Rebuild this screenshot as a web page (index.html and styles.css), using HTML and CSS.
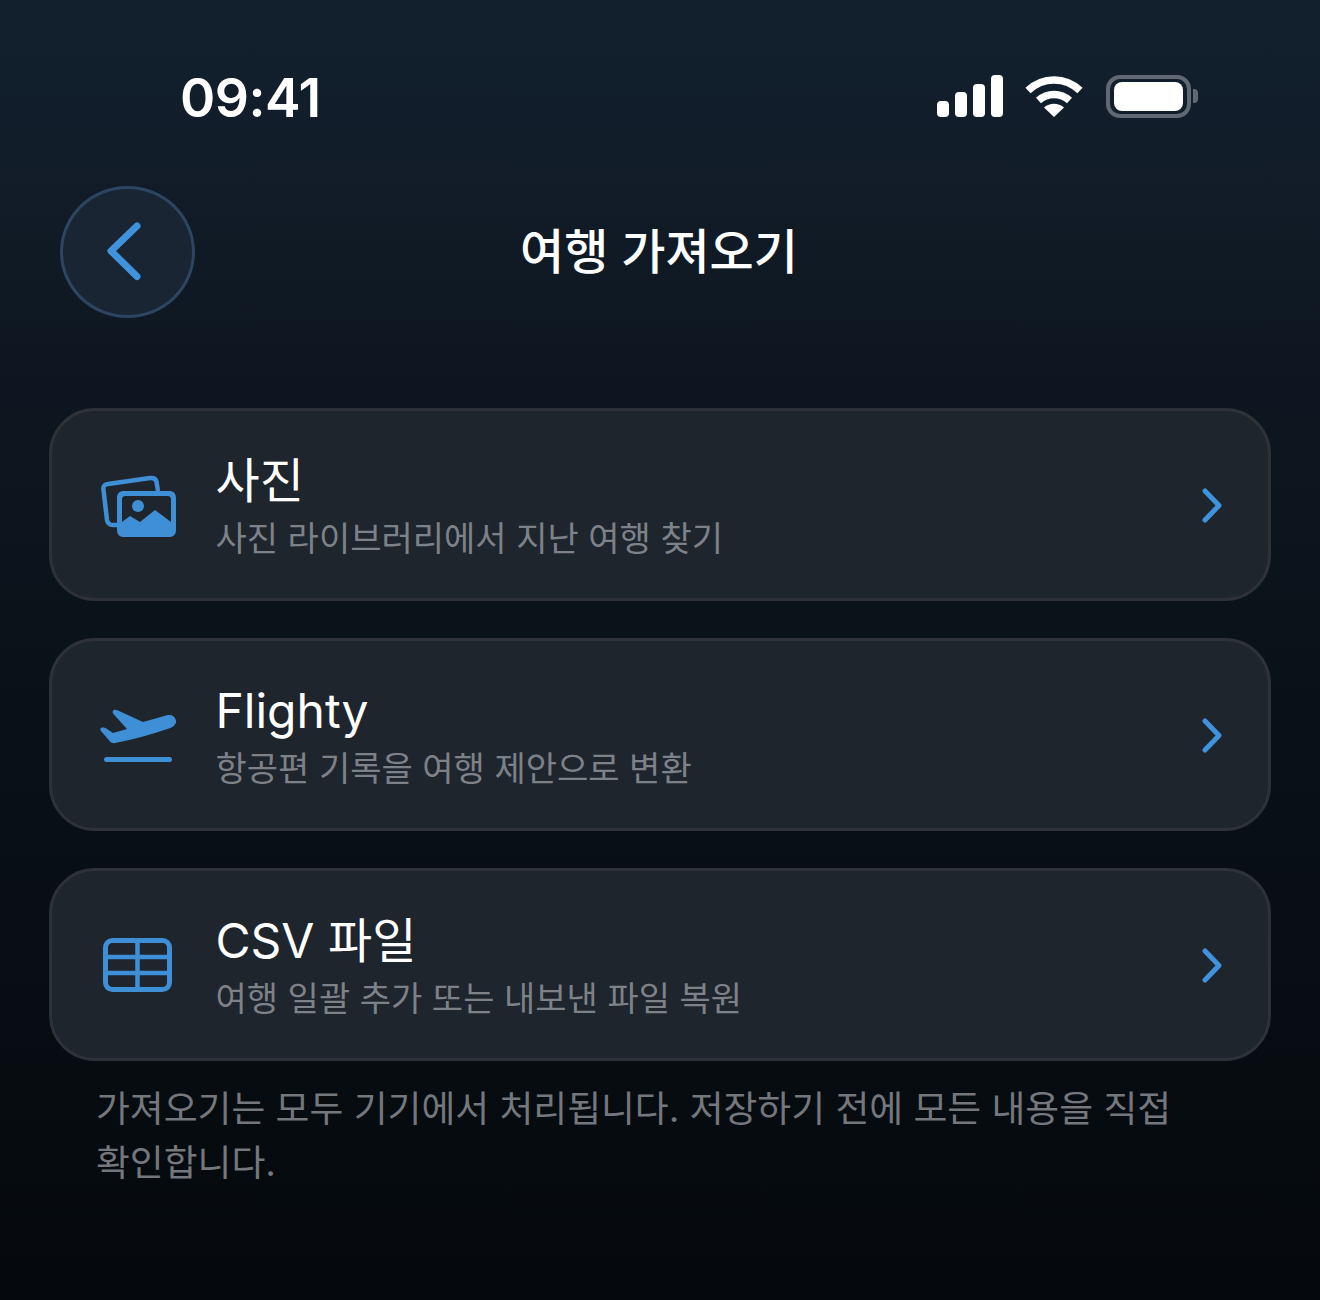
FILE: index.html
```html
<!DOCTYPE html>
<html lang="ko">
<head>
    <meta charset="UTF-8">
    <meta name="viewport" content="width=device-width, initial-scale=1.0">
    <title>여행 가져오기</title>
    <link rel="stylesheet" href="styles.css">
</head>
<body>
    <div class="screen">
        <div class="status-bar">
            <span class="time">09:41</span>
            <div class="status-icons">
                <svg class="signal" width="66" height="42" viewBox="0 0 66 42">
                    <rect x="0" y="26" width="12" height="16" rx="4"/>
                    <rect x="18" y="17" width="12" height="25" rx="4"/>
                    <rect x="36" y="9" width="12" height="33" rx="4"/>
                    <rect x="54" y="0" width="12" height="42" rx="4"/>
                </svg>
                <svg class="wifi" width="58" height="42" viewBox="0 0 58 42">
                    <path d="M3 15.500C18 1.500 40 1.500 55 15.500" fill="none" stroke="#fff" stroke-width="7.500"/>
                    <path d="M13.500 25.500C22.500 17.500 35.500 17.500 44.500 25.500" fill="none" stroke="#fff" stroke-width="7.500"/>
                    <path d="M29 42L19 32.500C25 27.500 33 27.500 39 32.500Z" fill="#fff"/>
                </svg>
                <div class="battery">
                    <div class="battery-body"><div class="battery-fill"></div></div>
                    <div class="battery-cap"></div>
                </div>
            </div>
        </div>

        <header class="nav">
            <button class="back-button">
                <svg width="40" height="60" viewBox="0 0 40 60">
                    <path d="M33 5L7 30L33 55.500" fill="none" stroke="#3f93dc" stroke-width="7" stroke-linecap="round" stroke-linejoin="round"/>
                </svg>
            </button>
            <h1>여행 가져오기</h1>
        </header>

        <div class="card-list">
            <div class="card">
                <svg class="card-icon" width="76" height="64" viewBox="0 0 76 64">
                    <path d="M17 52H13C9 52 7.500 50 7 47L3.500 17C3 13 4.500 11.500 8 11L50 5C54 4.500 56 6 56.500 9L58 18" fill="none" stroke="#3f8fd6" stroke-width="4.500"/>
                    <path fill-rule="evenodd" fill="#3f8fd6" d="M24 18H69C73.500 18 76 20.500 76 25V57C76 61.500 73.500 64 69 64H24C19.500 64 17 61.500 17 57V25C17 20.500 19.500 18 24 18ZM26 23C23 23 22 24 22 27V49L30 43L40 49L55 37L71 49V27C71 24 70 23 67 23Z"/>
                    <circle cx="38" cy="33" r="6" fill="#3f8fd6"/>
                </svg>
                <div class="card-text">
                    <div class="card-title">사진</div>
                    <div class="card-sub">사진 라이브러리에서 지난 여행 찾기</div>
                </div>
                <svg class="chevron" width="24" height="36" viewBox="0 0 24 36">
                    <path d="M5 4L19 18.500L5 33" fill="none" stroke="#3f93dc" stroke-width="5" stroke-linecap="round" stroke-linejoin="round"/>
                </svg>
            </div>

            <div class="card">
                <svg class="card-icon" width="76" height="64" viewBox="0 0 76 64">
                    <path fill="#3f8fd6" d="M13 7.500C14 6.500 16 6.800 18 7.500L43 19L66 12.500C71 11 75 13 76 17.500C76.500 21.500 73 24 69 25.500C50 32 32 36.500 15 40C13 40.500 11.500 40 10 38.500L1 28C-.5 26 .5 24.500 3 24.500C4.500 24.500 5.500 25 7 26L13 30L27 26L13.500 11C12.500 10 12.500 8.500 13 7.500Z"/>
                    <rect x="4" y="54" width="68" height="5" rx="2.500" fill="#3f8fd6"/>
                </svg>
                <div class="card-text">
                    <div class="card-title">Flighty</div>
                    <div class="card-sub">항공편 기록을 여행 제안으로 변환</div>
                </div>
                <svg class="chevron" width="24" height="36" viewBox="0 0 24 36">
                    <path d="M5 4L19 18.500L5 33" fill="none" stroke="#3f93dc" stroke-width="5" stroke-linecap="round" stroke-linejoin="round"/>
                </svg>
            </div>

            <div class="card">
                <svg class="card-icon" width="76" height="64" viewBox="0 0 76 64">
                    <rect x="5.500" y="7.500" width="64" height="49" rx="7" fill="none" stroke="#3f8fd6" stroke-width="5"/>
                    <path d="M5.500 24H69.500M5.500 40H69.500M37.500 7.500V56.500" fill="none" stroke="#3f8fd6" stroke-width="4.500"/>
                </svg>
                <div class="card-text">
                    <div class="card-title">CSV 파일</div>
                    <div class="card-sub">여행 일괄 추가 또는 내보낸 파일 복원</div>
                </div>
                <svg class="chevron" width="24" height="36" viewBox="0 0 24 36">
                    <path d="M5 4L19 18.500L5 33" fill="none" stroke="#3f93dc" stroke-width="5" stroke-linecap="round" stroke-linejoin="round"/>
                </svg>
            </div>
        </div>

        <p class="note">가져오기는 모두 기기에서 처리됩니다. 저장하기 전에 모든 내용을 직접 확인합니다.</p>
    </div>
</body>
</html>
```

FILE: styles.css
```css
* {
    box-sizing: border-box;
}

body {
    margin: 0;
    background: #05090d;
    font-family: "Inter", "Noto Sans CJK KR", sans-serif;
    color: #fff;
}

.screen {
    width: 1320px;
    height: 1300px;
    overflow: hidden;
    padding: 0 49px;
    background: linear-gradient(180deg, #12202e 0%, #111c28 14%, #0e1721 28%, #0a121a 48%, #080e14 70%, #05090d 100%);
}

.status-bar {
    display: flex;
    align-items: center;
    justify-content: space-between;
    height: 42px;
    margin-top: 75px;
    padding: 0 73px 0 131px;
}

.time {
    font-size: 53.500px;
    font-weight: 600;
    letter-spacing: -0.5px;
    line-height: 42px;
    padding-top: 4px;
}

.status-icons {
    display: flex;
    align-items: center;
}

.signal {
    fill: #fff;
    margin-right: 22px;
}

.wifi {
    margin-right: 23px;
}

.battery {
    display: flex;
    align-items: center;
    gap: 2px;
}

.battery-body {
    width: 85px;
    height: 43px;
    padding: 3px 4px;
    border: 4px solid #5f6873;
    border-radius: 14px;
}

.battery-fill {
    height: 100%;
    background: #fff;
    border-radius: 8px;
}

.battery-cap {
    width: 5px;
    height: 14px;
    background: #5f6873;
    border-radius: 0 4px 4px 0;
}

.nav {
    display: flex;
    align-items: center;
    justify-content: center;
    position: relative;
    height: 134px;
    margin-top: 69px;
}

.back-button {
    position: absolute;
    left: 11px;
    top: 0;
    display: flex;
    align-items: center;
    justify-content: center;
    width: 135px;
    height: 132px;
    padding: 0 8px 2px 0;
    background: #1a2533;
    border: 3px solid #2c4560;
    border-radius: 50%;
}

.nav h1 {
    margin: 0 2px 2px 0;
    font-size: 48px;
    font-weight: 500;
    line-height: 60px;
}

.card-list {
    display: flex;
    flex-direction: column;
    gap: 37px;
    margin-top: 88px;
}

.card {
    display: flex;
    align-items: center;
    height: 193px;
    padding: 0 44px 0 48px;
    background: #1f252d;
    border: 3px solid #2e3238;
    border-radius: 46px;
}

.card-icon {
    flex: none;
    margin-right: 39.500px;
}

.card-text {
    flex: 1;
    padding-top: 5px;
}

.card-title {
    font-size: 48px;
    line-height: 58px;
}

.card-sub {
    margin-top: 6px;
    font-size: 34px;
    line-height: 46px;
    color: #7d8188;
}

.note {
    margin: 21px 47px 0;
    font-size: 36.800px;
    line-height: 54px;
    color: #74777c;
    word-break: keep-all;
}
```
